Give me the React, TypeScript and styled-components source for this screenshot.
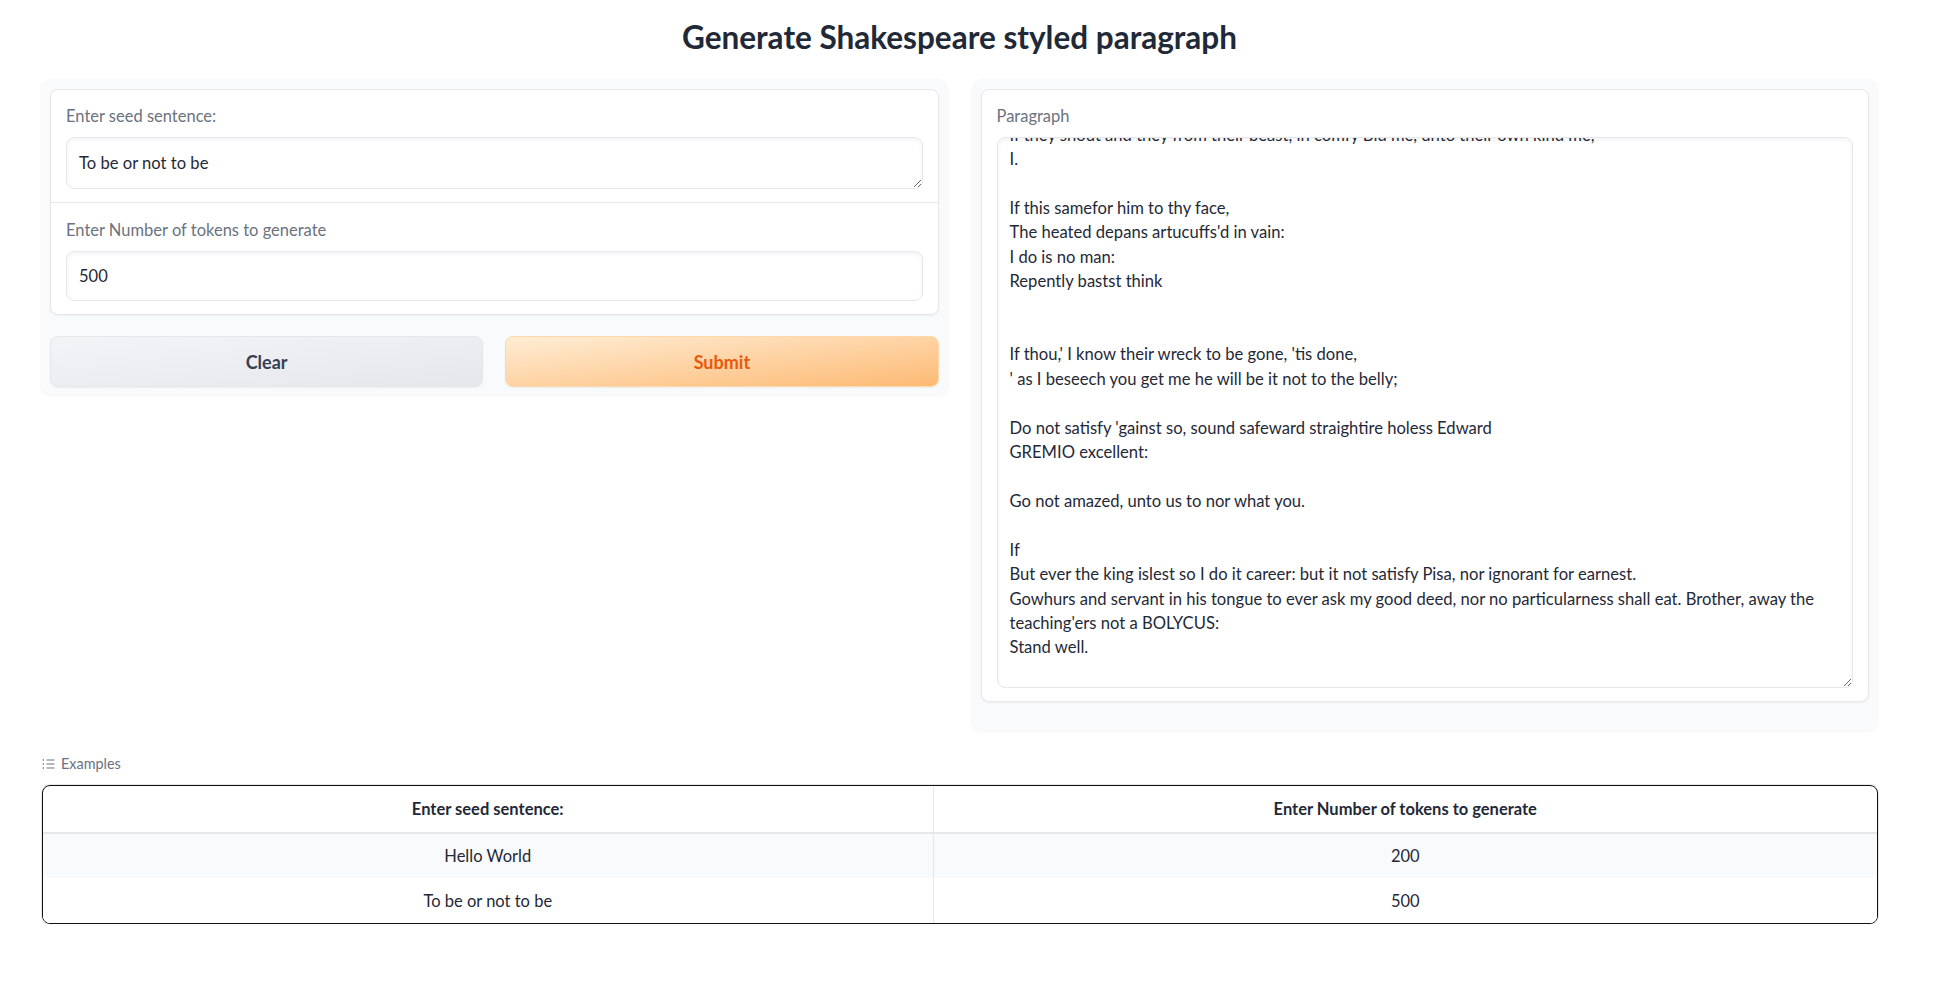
import React, { useLayoutEffect, useRef } from 'react';
import styled, { createGlobalStyle } from 'styled-components';

const GlobalStyle = createGlobalStyle`
  * { box-sizing: border-box; }
  body {
    margin: 0;
    background: #ffffff;
    font-family: 'Lato', 'Noto Sans', sans-serif;
    color: #1f2937;
  }
`;

const Page = styled.div`
  width: 1839px;
  margin-left: 40px;
  padding-top: 15px;
`;

const Title = styled.h1`
  margin: 0 0 20px;
  text-align: center;
  font-size: 31.5px;
  line-height: 44px;
  font-weight: 700;
  color: #1f2937;
`;

const Row = styled.div`
  display: flex;
  gap: 22px;
  align-items: flex-start;
`;

const Panel = styled.div<{ $extra?: number }>`
  flex: 1;
  background: #f9fafb;
  border-radius: 10px;
  padding: 10px 10px ${(p) => 10 + (p.$extra || 0)}px;
`;

const Block = styled.div`
  background: #ffffff;
  border: 1px solid #e5e7eb;
  border-radius: 8px;
  box-shadow: 0 1px 2px rgba(0, 0, 0, 0.05);
  overflow: hidden;
`;

const Field = styled.div`
  padding: 15px 15px 13px;
  & + & {
    border-top: 1px solid #e5e7eb;
    padding-top: 16px;
  }
`;

const Label = styled.div`
  font-size: 16.5px;
  line-height: 22px;
  color: #6b7280;
  margin-bottom: 10px;
`;

const TextArea = styled.textarea<{ $h: number }>`
  display: block;
  width: 100%;
  height: ${(p) => p.$h}px;
  padding: 10px 12px;
  border: 1px solid #e5e7eb;
  border-radius: 8px;
  box-shadow: inset 0 2px 4px rgba(0, 0, 0, 0.05);
  font-family: inherit;
  font-size: 16.6px;
  line-height: 24.4px;
  color: #1f2937;
  background: #ffffff;
  resize: vertical;
  outline: none;
  scrollbar-width: none;
  &::-webkit-scrollbar {
    display: none;
  }
`;

const SeedArea = styled(TextArea)`
  padding-top: 13px;
`;

const Input = styled.input`
  display: block;
  width: 100%;
  height: 50px;
  padding: 0 12px;
  border: 1px solid #e5e7eb;
  border-radius: 8px;
  box-shadow: inset 0 2px 4px rgba(0, 0, 0, 0.05);
  font-family: inherit;
  font-size: 16.5px;
  color: #1f2937;
  outline: none;
`;

const Buttons = styled.div`
  display: grid;
  grid-template-columns: 1fr 1fr;
  gap: 22px;
  margin-top: 21px;
`;

const Button = styled.button<{ $primary?: boolean }>`
  height: 51px;
  border-radius: 8px;
  font-family: inherit;
  font-size: 18px;
  font-weight: 700;
  cursor: pointer;
  border: 1px solid ${(p) => (p.$primary ? '#fed7aa' : '#e5e7eb')};
  color: ${(p) => (p.$primary ? '#ea580c' : '#374151')};
  background: ${(p) =>
    p.$primary
      ? 'linear-gradient(to bottom right, #ffedd5, #fdba74)'
      : 'linear-gradient(to bottom right, #f3f4f6, #e5e7eb)'};
  box-shadow: 0 1px 2px rgba(0, 0, 0, 0.05);
`;

const Examples = styled.div`
  margin-top: 21px;
`;

const ExamplesLabel = styled.div`
  display: flex;
  align-items: center;
  gap: 6px;
  font-size: 14.4px;
  line-height: 20px;
  color: #6b7280;
  padding-left: 2px;
  margin-bottom: 11px;
`;

const TableWrap = styled.div`
  margin: 0 1px 0 2px;
  border: 1px solid #111111;
  border-radius: 8px;
  box-shadow: 0 0 0 1px #e5e7eb;
  overflow: hidden;
`;

const Table = styled.table`
  width: 100%;
  border-collapse: collapse;
  table-layout: fixed;
  font-size: 16.5px;
  color: #1f2937;
`;

const Th = styled.th`
  height: 47px;
  font-weight: 700;
  text-align: center;
  border-bottom: 2px solid #e5e7eb;
  & + & {
    border-left: 1px solid #e5e7eb;
  }
`;

const Tr = styled.tr<{ $odd?: boolean }>`
  background: ${(p) => (p.$odd ? '#f9fafb' : '#ffffff')};
  & + & td {
    border-top: 2px solid #ffffff;
  }
`;

const Td = styled.td`
  height: 45px;
  text-align: center;
  & + & {
    border-left: 1px solid #e5e7eb;
  }
`;

const ListIcon = () => (
  <svg width="13" height="12" viewBox="0 0 13 12" fill="none" stroke="#6b7280" strokeWidth="1.1">
    <path d="M4.5 2h8M4.5 6h8M4.5 10h8" />
    <path d="M0.8 2h1.2M0.8 6h1.2M0.8 10h1.2" strokeWidth="1.3" />
  </svg>
);

const LINE = 24.4;
const BEFORE = [
  'To be or not to be, the sleep of all the world,',
  'And tell me what thou art, and what I am;',
  'If they shout and they from their beast, in comfy Bid me, unto their own kind me,',
];

const paragraph = [
  ...BEFORE,
  'I.',
  '',
  'If this samefor him to thy face,',
  "The heated depans artucuffs'd in vain:",
  'I do is no man:',
  'Repently bastst think',
  '',
  '',
  "If thou,' I know their wreck to be gone, 'tis done,",
  "' as I beseech you get me he will be it not to the belly;",
  '',
  "Do not satisfy 'gainst so, sound safeward straightire holess Edward",
  'GREMIO excellent:',
  '',
  'Go not amazed, unto us to nor what you.',
  '',
  'If',
  'But ever the king islest so I do it career: but it not satisfy Pisa, nor ignorant for earnest.',
  "Gowhurs and servant in his tongue to ever ask my good deed, nor no particularness shall eat. Brother, away the teaching'ers not a BOLYCUS:",
  'Stand well.',
  '',
  '',
  '',
].join('\n');

const examples = [
  { seed: 'Hello World', tokens: 200 },
  { seed: 'To be or not to be', tokens: 500 },
];

export default function App() {
  const outRef = useRef<HTMLTextAreaElement>(null);

  useLayoutEffect(() => {
    if (outRef.current) {
      outRef.current.scrollTop = BEFORE.length * LINE + 1;
    }
  }, []);

  return (
    <>
      <GlobalStyle />
      <Page>
        <Title>Generate Shakespeare styled paragraph</Title>
        <Row>
          <Panel>
            <Block>
              <Field>
                <Label>Enter seed sentence:</Label>
                <SeedArea $h={52} defaultValue="To be or not to be" rows={1} />
              </Field>
              <Field>
                <Label>Enter Number of tokens to generate</Label>
                <Input type="text" defaultValue="500" />
              </Field>
            </Block>
            <Buttons>
              <Button>Clear</Button>
              <Button $primary>Submit</Button>
            </Buttons>
          </Panel>
          <Panel $extra={21}>
            <Block>
              <Field>
                <Label>Paragraph</Label>
                <TextArea ref={outRef} $h={551} defaultValue={paragraph} readOnly />
              </Field>
            </Block>
          </Panel>
        </Row>
        <Examples>
          <ExamplesLabel>
            <ListIcon />
            Examples
          </ExamplesLabel>
          <TableWrap>
            <Table>
              <colgroup>
                <col style={{ width: 890 }} />
                <col />
              </colgroup>
              <thead>
                <tr>
                  <Th>Enter seed sentence:</Th>
                  <Th>Enter Number of tokens to generate</Th>
                </tr>
              </thead>
              <tbody>
                {examples.map((ex, i) => (
                  <Tr key={ex.seed} $odd={i === 0}>
                    <Td>{ex.seed}</Td>
                    <Td>{ex.tokens}</Td>
                  </Tr>
                ))}
              </tbody>
            </Table>
          </TableWrap>
        </Examples>
      </Page>
    </>
  );
}
